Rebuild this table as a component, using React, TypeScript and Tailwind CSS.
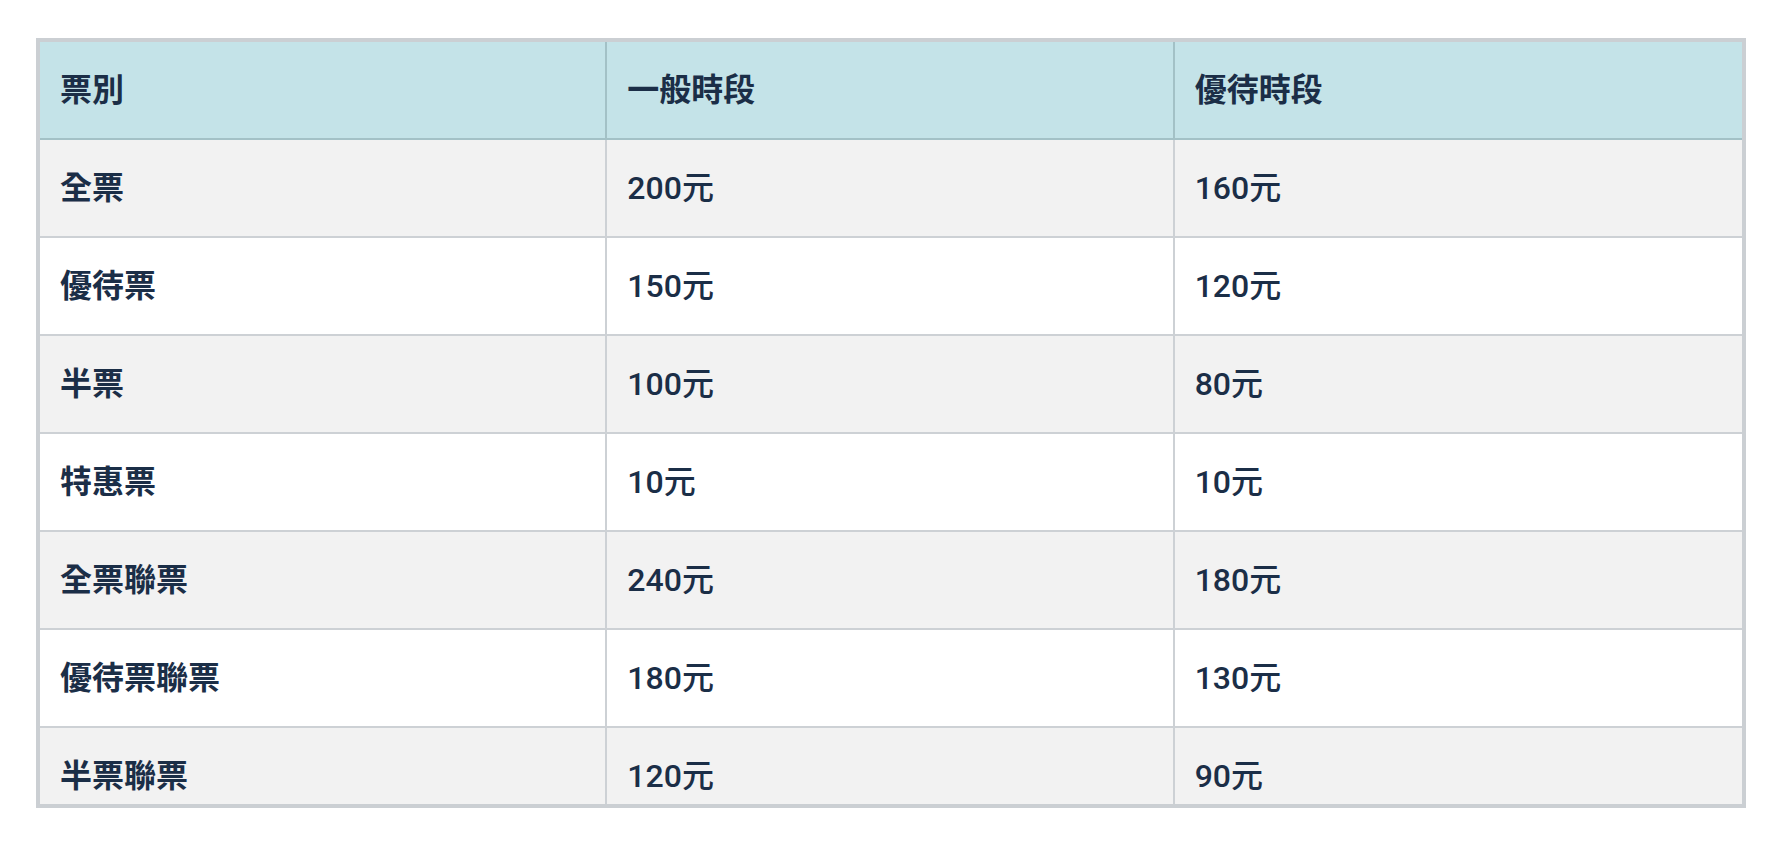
import React from "react";

const rows: [string, string, string][] = [
  ["全票", "200元", "160元"],
  ["優待票", "150元", "120元"],
  ["半票", "100元", "80元"],
  ["特惠票", "10元", "10元"],
  ["全票聯票", "240元", "180元"],
  ["優待票聯票", "180元", "130元"],
  ["半票聯票", "120元", "90元"],
];

export default function App() {
  return (
    <div
      className="w-[1790px] h-[848px] bg-white pt-[38px] pl-[36px] text-[#1b2e47]"
      style={{ fontFamily: 'Roboto, "Noto Sans CJK TC", "Noto Sans", sans-serif' }}
    >
      <div className="w-[1710px] h-[770px] border-4 border-[#cbcfd3] overflow-hidden">
        <div className="grid grid-cols-3 bg-[#c4e3e8] border-b-2 border-[#a3c1c6] h-[98px]">
          <div className="flex items-center pl-[20px] border-r-2 border-[#a3c1c6] text-[32px] font-bold leading-none">票別</div>
          <div className="flex items-center pl-[20px] border-r-2 border-[#a3c1c6] text-[32px] font-bold leading-none">一般時段</div>
          <div className="flex items-center pl-[20px] text-[32px] font-bold leading-none">優待時段</div>
        </div>
        {rows.map((r, i) => (
          <div
            key={i}
            className={
              "grid grid-cols-3 h-[98px] border-b-2 border-[#cdd1d5] " +
              (i % 2 === 0 ? "bg-[#f2f2f2]" : "bg-white")
            }
          >
            <div className="flex items-center pl-[20px] border-r-2 border-[#cdd1d5] text-[32px] font-bold leading-none">{r[0]}</div>
            <div className="flex items-center pl-[20px] border-r-2 border-[#cdd1d5] text-[32px] font-medium leading-none">{r[1]}</div>
            <div className="flex items-center pl-[20px] text-[32px] font-medium leading-none">{r[2]}</div>
          </div>
        ))}
      </div>
    </div>
  );
}
